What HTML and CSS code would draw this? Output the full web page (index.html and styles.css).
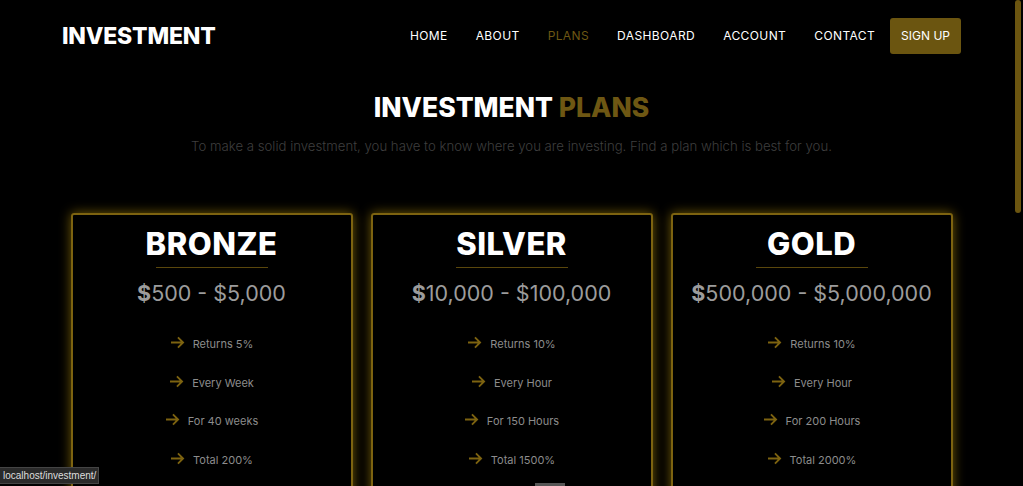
FILE: index.html
```html
<!DOCTYPE html>
<html lang="en">
<head>
<meta charset="utf-8">
<title>Investment Plans</title>
<link rel="stylesheet" href="styles.css">
</head>
<body>
<header class="header">
  <div class="header-inner">
    <a class="logo" href="#">INVESTMENT</a>
    <nav class="nav">
      <a class="nav-link" href="#">HOME</a>
      <a class="nav-link" href="#">ABOUT</a>
      <a class="nav-link active" href="#">PLANS</a>
      <a class="nav-link" href="#">DASHBOARD</a>
      <a class="nav-link" href="#">ACCOUNT</a>
      <a class="nav-link" href="#">CONTACT</a>
      <a class="btn-signup" href="#">SIGN UP</a>
    </nav>
  </div>
</header>

<main class="plans">
  <h1 class="plans-title">INVESTMENT <span class="accent">PLANS</span></h1>
  <p class="plans-sub">To make a solid investment, you have to know where you are investing. Find a plan which is best for you.</p>

  <div class="cards">
    <div class="card">
      <h2 class="card-title">BRONZE</h2>
      <div class="card-rule"></div>
      <div class="card-price"><b>$</b>500 - $5,000</div>
      <ul class="features">
        <li class="feature"><svg class="arrow" viewBox="0 0 16 14"><path d="M1 7H14M8.5 1.5L14 7L8.5 12.5"/></svg><span>Returns 5%</span></li>
        <li class="feature"><svg class="arrow" viewBox="0 0 16 14"><path d="M1 7H14M8.5 1.5L14 7L8.5 12.5"/></svg><span>Every Week</span></li>
        <li class="feature"><svg class="arrow" viewBox="0 0 16 14"><path d="M1 7H14M8.5 1.5L14 7L8.5 12.5"/></svg><span>For 40 weeks</span></li>
        <li class="feature"><svg class="arrow" viewBox="0 0 16 14"><path d="M1 7H14M8.5 1.5L14 7L8.5 12.5"/></svg><span>Total 200%</span></li>
      </ul>
    </div>
    <div class="card">
      <h2 class="card-title">SILVER</h2>
      <div class="card-rule"></div>
      <div class="card-price"><b>$</b>10,000 - $100,000</div>
      <ul class="features">
        <li class="feature"><svg class="arrow" viewBox="0 0 16 14"><path d="M1 7H14M8.5 1.5L14 7L8.5 12.5"/></svg><span>Returns 10%</span></li>
        <li class="feature"><svg class="arrow" viewBox="0 0 16 14"><path d="M1 7H14M8.5 1.5L14 7L8.5 12.5"/></svg><span>Every Hour</span></li>
        <li class="feature"><svg class="arrow" viewBox="0 0 16 14"><path d="M1 7H14M8.5 1.5L14 7L8.5 12.5"/></svg><span>For 150 Hours</span></li>
        <li class="feature"><svg class="arrow" viewBox="0 0 16 14"><path d="M1 7H14M8.5 1.5L14 7L8.5 12.5"/></svg><span>Total 1500%</span></li>
      </ul>
    </div>
    <div class="card">
      <h2 class="card-title">GOLD</h2>
      <div class="card-rule"></div>
      <div class="card-price"><b>$</b>500,000 - $5,000,000</div>
      <ul class="features">
        <li class="feature"><svg class="arrow" viewBox="0 0 16 14"><path d="M1 7H14M8.5 1.5L14 7L8.5 12.5"/></svg><span>Returns 10%</span></li>
        <li class="feature"><svg class="arrow" viewBox="0 0 16 14"><path d="M1 7H14M8.5 1.5L14 7L8.5 12.5"/></svg><span>Every Hour</span></li>
        <li class="feature"><svg class="arrow" viewBox="0 0 16 14"><path d="M1 7H14M8.5 1.5L14 7L8.5 12.5"/></svg><span>For 200 Hours</span></li>
        <li class="feature"><svg class="arrow" viewBox="0 0 16 14"><path d="M1 7H14M8.5 1.5L14 7L8.5 12.5"/></svg><span>Total 2000%</span></li>
      </ul>
    </div>
  </div>
</main>

<div class="scroll-thumb" aria-hidden="true"></div>
<div class="hscroll-thumb" aria-hidden="true"></div>
<div class="status-bar">localhost/investment/</div>
</body>
</html>
```

FILE: styles.css
```css
* { box-sizing: border-box; }
html, body { margin: 0; padding: 0; }
body {
  background: #000;
  color: #fff;
  font-family: "Inter", "Roboto", "Liberation Sans", sans-serif;
  min-height: 1100px;
}
a { text-decoration: none; }

.header-inner {
  width: 899px;
  margin: 0 auto;
  height: 71px;
  display: flex;
  align-items: center;
  justify-content: space-between;
}
.logo {
  color: #fff;
  font-weight: 800;
  font-size: 23px;
  letter-spacing: -0.2px;
}
.nav {
  display: flex;
  align-items: center;
}
.nav-link {
  color: #fff;
  font-size: 12px;
  font-weight: 400;
  letter-spacing: 0.4px;
  padding: 0 14px;
}
.nav-link.active { color: #6e5713; }
.btn-signup {
  margin-left: 1px;
  background: #6b5510;
  color: #fff;
  font-size: 12px;
  font-weight: 400;
  letter-spacing: 0;
  height: 36px;
  padding: 0 11px;
  display: flex;
  align-items: center;
  border-radius: 3px;
}

.plans {
  text-align: center;
  padding-top: 18px;
}
.plans-title {
  margin: 0;
  font-size: 26.5px;
  font-weight: 800;
  line-height: 36px;
}
.accent { color: #6e5713; }
.plans-sub {
  margin: 11px 0 0;
  color: #3e3e3e;
  font-size: 13.2px;
  font-weight: 300;
  line-height: 20px;
}

.cards {
  width: 882px;
  margin: 57px auto 0;
  display: flex;
  gap: 18px;
}
.card {
  flex: 1;
  border: 2px solid #7d6310;
  border-radius: 3px;
  box-shadow: 0 0 12px rgba(190, 150, 10, 0.6);
  padding-top: 11px;
  padding-bottom: 40px;
  display: flex;
  flex-direction: column;
  align-items: center;
}
.card-title {
  margin: 0;
  font-size: 31px;
  font-weight: 800;
  line-height: 36px;
  letter-spacing: 0.5px;
}
.card-rule {
  width: 112px;
  height: 1px;
  background: #5a470c;
  margin-top: 5px;
}
.card-price {
  margin-top: 11px;
  font-size: 21.5px;
  color: #9c9c9c;
  line-height: 28px;
  font-weight: 400;
}
.card-price b { font-weight: 700; }
.features {
  list-style: none;
  margin: 28px 0 0;
  padding: 0;
  display: flex;
  flex-direction: column;
  gap: 20.5px;
}
.feature {
  display: flex;
  align-items: center;
  justify-content: center;
  gap: 8px;
  color: #8c8c8c;
  font-size: 11px;
  line-height: 18px;
}
.arrow {
  width: 15px;
  height: 13px;
  fill: none;
  stroke: #7d6310;
  stroke-width: 2;
  margin-top: -3px;
}

.scroll-thumb {
  position: fixed;
  top: 0;
  right: 2px;
  width: 6px;
  height: 213px;
  background: #6b5510;
  border-radius: 3px;
}
.hscroll-thumb {
  position: fixed;
  bottom: 0;
  left: 535px;
  width: 30px;
  height: 3px;
  background: #555;
}
.status-bar {
  position: fixed;
  left: 0;
  bottom: 2px;
  height: 17px;
  padding: 0 2px 0 3px;
  background: #2a2a2a;
  border: 1px solid #444;
  border-left: 0;
  color: #ddd;
  font-family: "Liberation Sans", sans-serif;
  font-size: 10px;
  line-height: 15px;
}
```
